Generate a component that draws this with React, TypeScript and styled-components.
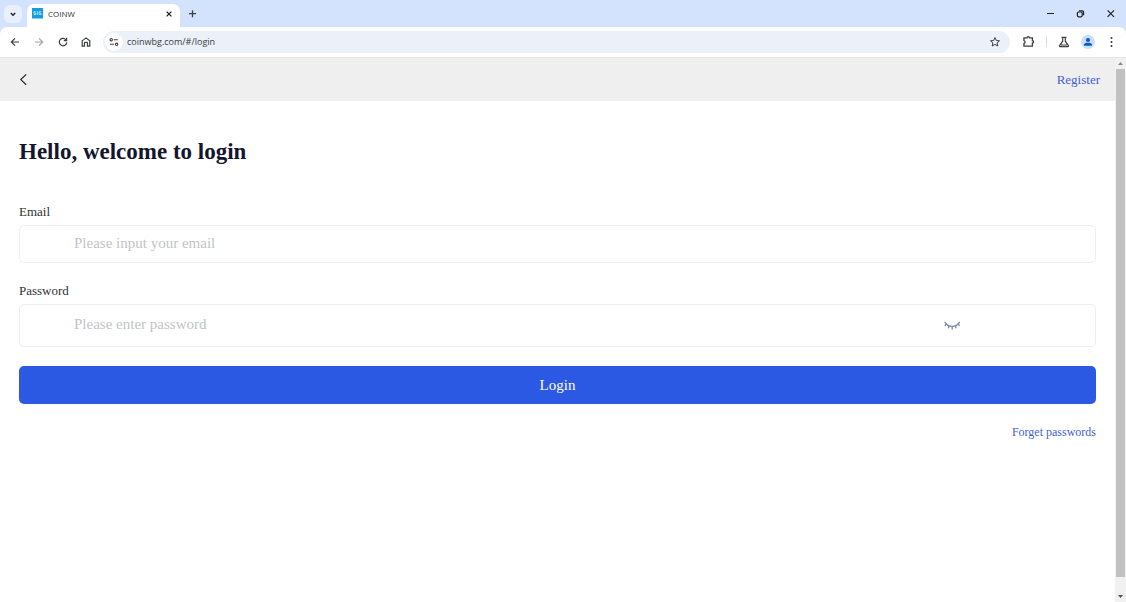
import React from "react";
import styled, { createGlobalStyle } from "styled-components";

const GlobalStyle = createGlobalStyle`
  * { box-sizing: border-box; }
  html, body, #root { height: 100%; }
  body { margin: 0; overflow: hidden; background: #fff; }
  button { padding: 0; border: 0; background: none; color: inherit; font: inherit; cursor: pointer; }
  a { text-decoration: none; }
  svg { display: block; flex: none; }
`;

const Window = styled.div`
  display: flex;
  flex-direction: column;
  height: 100vh;
  font-family: "Open Sans", "Noto Sans", sans-serif;
  color: #303236;
  background: #d3e2fd;
`;

const TabStrip = styled.div`
  display: flex;
  align-items: center;
  height: 27px;
  padding-left: 4px;
  flex: none;
`;

const TabSearch = styled.button`
  display: grid;
  place-items: center;
  width: 18px;
  height: 18px;
  border-radius: 6px;
  background: #e9f0fd;
`;

const Tab = styled.div`
  display: flex;
  align-items: center;
  align-self: flex-end;
  width: 153px;
  height: 23px;
  margin-left: 5px;
  padding: 0 5px 4px;
  border-radius: 7px 7px 0 0;
  background: #fff;
  font-size: 8px;
`;

const TabTitle = styled.span`
  flex: 1;
  padding-left: 5px;
  line-height: 18px;
`;

const IconButton = styled.button<{ $size?: number }>`
  display: grid;
  place-items: center;
  flex: none;
  width: ${(p) => p.$size ?? 24}px;
  height: ${(p) => p.$size ?? 24}px;
`;

const WindowControls = styled.div`
  display: flex;
  margin-left: auto;
`;

const WindowButton = styled.button`
  display: grid;
  place-items: center;
  width: 30px;
  height: 27px;
`;

const Toolbar = styled.div`
  display: flex;
  align-items: center;
  flex: none;
  height: 30px;
  padding: 0 3px 1px;
  border-radius: 7px 7px 0 0;
  background: #fff;
`;

const AddressBar = styled.div`
  display: flex;
  align-items: center;
  flex: 1;
  height: 22px;
  margin: 0 6px 0 5px;
  padding: 0 4px 0 2px;
  border-radius: 11px;
  background: #ebf0f9;
`;

const SiteInfo = styled.button`
  display: grid;
  place-items: center;
  flex: none;
  width: 18px;
  height: 18px;
  border-radius: 50%;
  background: #fff;
`;

const AddressInput = styled.input`
  flex: 1;
  min-width: 0;
  padding: 0 0 0 4px;
  border: 0;
  outline: 0;
  background: none;
  color: #3a3c40;
  font: 9px "Open Sans", "Noto Sans", sans-serif;
`;

const Divider = styled.span`
  width: 1px;
  height: 11px;
  margin: 0 5px 0 6px;
  background: #cfdcf3;
`;

const Viewport = styled.div`
  display: flex;
  flex: 1;
  min-height: 0;
  border-top: 1px solid #e3e4e6;
  background: #fff;
`;

const Page = styled.main`
  flex: 1;
  min-width: 0;
  font-family: "Liberation Serif", "Times New Roman", serif;
`;

const PageHeader = styled.header`
  display: flex;
  align-items: center;
  justify-content: space-between;
  height: 43px;
  padding: 0 15px 0 11px;
  background: #efefef;
`;

const TextLink = styled.a<{ $size: number }>`
  color: #3f5fd6;
  font-size: ${(p) => p.$size}px;
  line-height: 16px;
`;

const Form = styled.form`
  display: flex;
  flex-direction: column;
  padding: 38px 19px 0;
`;

const Title = styled.h1`
  margin: 0 0 39px;
  color: #14162d;
  font-size: 23px;
  line-height: 26px;
`;

const Label = styled.label`
  margin-bottom: 5px;
  color: #303133;
  font-size: 13px;
  line-height: 16px;
`;

const Field = styled.div<{ $height: number; $gap: number }>`
  display: flex;
  align-items: center;
  height: ${(p) => p.$height}px;
  margin-bottom: ${(p) => p.$gap}px;
  padding: 0 54px;
  border: 1px solid #eeeff1;
  border-radius: 5px;
`;

const TextInput = styled.input`
  flex: 1;
  min-width: 0;
  height: 100%;
  padding: 0 0 2px;
  border: 0;
  outline: 0;
  background: none;
  color: #303133;
  font: 15px "Liberation Serif", "Times New Roman", serif;
  &::placeholder { color: #c0c4c8; opacity: 1; }
`;

const RevealButton = styled(IconButton)`
  margin-right: 77px;
`;

const LoginButton = styled.button`
  height: 38px;
  margin-bottom: 20px;
  border-radius: 5px;
  background: #2c59e3;
  color: #fff;
  font-size: 15px;
`;

const FormFooter = styled.div`
  display: flex;
  justify-content: flex-end;
`;

const Scrollbar = styled.div`
  display: flex;
  flex-direction: column;
  width: 11px;
  background: #f1f1f1;
`;

const ScrollArrow = styled.button<{ $tall?: boolean }>`
  display: grid;
  place-items: center;
  height: ${(p) => (p.$tall ? 12 : 11)}px;
`;

const ScrollTrack = styled.div`
  flex: 1;
  padding: 0 1px 13px;
`;

const ScrollThumb = styled.div`
  height: 100%;
  background: #c1c1c1;
`;

type IconProps = { size?: number; color?: string; stroke?: number; children: React.ReactNode };

const Icon = ({ size = 12, color = "#3c3f43", stroke = 1.2, children }: IconProps) => (
  <svg width={size} height={size} viewBox="0 0 12 12" fill="none" stroke={color} strokeWidth={stroke} aria-hidden="true">
    {children}
  </svg>
);

export default function App() {
  return (
    <Window>
      <GlobalStyle />
      <TabStrip>
        <TabSearch aria-label="Search tabs">
          <Icon color="#1f2124" stroke={1.4}><path d="M3.8 5 6 7.2 8.2 5" /></Icon>
        </TabSearch>
        <Tab>
          <svg width="11" height="11" viewBox="0 0 11 11" aria-hidden="true">
            <rect width="11" height="10" fill="#109fdc" />
            <path d="M0 10.5h11" stroke="#8fcdec" />
            <path d="M3.7 3.7H1.9v1.4h1.7v1.5H1.7M5.3 3.3v3.6M9.2 3.7H7.1v2.9h2V5.3H8.2" fill="none" stroke="#d4f0fb" strokeWidth=".8" />
          </svg>
          <TabTitle>COINW</TabTitle>
          <IconButton $size={12} aria-label="Close tab">
            <Icon color="#1f2124" stroke={1.3}><path d="m3.6 3.6 4.8 4.8m0-4.8L3.6 8.4" /></Icon>
          </IconButton>
        </Tab>
        <IconButton aria-label="New tab">
          <Icon stroke={1.3}><path d="M6.5 2.2v7M3 5.7h7" /></Icon>
        </IconButton>
        <WindowControls>
          <WindowButton aria-label="Minimize"><Icon color="#1f2124" stroke={1}><path d="M2 5.5h7" /></Icon></WindowButton>
          <WindowButton aria-label="Restore">
            <Icon color="#1f2124" stroke={1.2}>
              <rect x="2.4" y="4" width="4.8" height="4.8" rx="1.2" />
              <path d="M4 2.8h3.2a1.4 1.4 0 0 1 1.4 1.4v3" />
            </Icon>
          </WindowButton>
          <WindowButton aria-label="Close"><Icon color="#1f2124" stroke={1.2}><path d="m2.6 2.4 6.4 6.4m0-6.4L2.6 8.8" /></Icon></WindowButton>
        </WindowControls>
      </TabStrip>

      <Toolbar>
        <IconButton aria-label="Back"><Icon><path d="M10 6H2.4M6 2.3 2.3 6 6 9.7" /></Icon></IconButton>
        <IconButton aria-label="Forward"><Icon color="#a2a4a7"><path d="M2 6h7.6M6 2.3 9.7 6 6 9.7" /></Icon></IconButton>
        <IconButton $size={23} aria-label="Reload">
          <Icon><path d="M9.2 4.2A3.7 3.7 0 1 0 9.7 6.4M9.6 1.8v2.8H6.8" /></Icon>
        </IconButton>
        <IconButton aria-label="Home">
          <Icon><path d="M2.2 4.9 6 1.9l3.8 3v5.3H7.5V7a.7.7 0 0 0-.7-.7H5.2a.7.7 0 0 0-.7.7v3.2H2.2z" /></Icon>
        </IconButton>
        <AddressBar>
          <SiteInfo aria-label="Site information">
            <Icon stroke={1.1}>
              <circle cx="3.2" cy="3.7" r="1.2" /><path d="M5.8 3.7h4M2 8.3h4" /><circle cx="8.6" cy="8.3" r="1.2" />
            </Icon>
          </SiteInfo>
          <AddressInput aria-label="Address" defaultValue="coinwbg.com/#/login" />
          <IconButton $size={22} aria-label="Bookmark">
            <Icon stroke={1}><path d="m6 1.6 1.3 2.9 3.2.3-2.4 2.1.7 3.1L6 8.4 3.2 10l.7-3.1-2.4-2.1 3.2-.3z" /></Icon>
          </IconButton>
        </AddressBar>
        <IconButton aria-label="Extensions">
          <Icon size={13}><path d="M1.8 2.6h2.8a1.1 1.1 0 0 1 2.2 0h2.8v2.6a1.1 1.1 0 0 1 0 2.2v2.8H1.8V7.8a1.4 1.4 0 0 0 0-2.7z" /></Icon>
        </IconButton>
        <Divider />
        <IconButton aria-label="Labs">
          <Icon><path d="M3.5 1.4h5M4.7 1.4v3.8L1.6 9.6c-.3.5 0 1 .5 1h7.8c.5 0 .8-.5.5-1L7.3 5.2V1.4M3 9h6" /></Icon>
        </IconButton>
        <IconButton aria-label="Profile">
          <svg width="14" height="14" viewBox="0 0 14 14" aria-hidden="true">
            <circle cx="7" cy="7" r="7" fill="#c9dffb" />
            <circle cx="7" cy="5" r="2" fill="#0b57d0" />
            <path d="M3 10.8V9.6C3 8.2 5 7.7 7 7.7s4 .5 4 1.9v1.2z" fill="#0b57d0" />
          </svg>
        </IconButton>
        <IconButton $size={23} aria-label="Menu">
          <Icon stroke={0}><g fill="#303236"><circle cx="5.5" cy="2" r="1" /><circle cx="5.5" cy="6" r="1" /><circle cx="5.5" cy="10" r="1" /></g></Icon>
        </IconButton>
      </Toolbar>

      <Viewport>
        <Page>
          <PageHeader>
            <IconButton aria-label="Go back">
              <Icon color="#22252b"><path d="M9.2.4 3.8 5.6l5.4 5.2" /></Icon>
            </IconButton>
            <TextLink $size={13} href="#/register">Register</TextLink>
          </PageHeader>
          <Form onSubmit={(e) => e.preventDefault()}>
            <Title>Hello, welcome to login</Title>
            <Label htmlFor="email">Email</Label>
            <Field $height={38} $gap={20}>
              <TextInput id="email" type="text" placeholder="Please input your email" />
            </Field>
            <Label htmlFor="password">Password</Label>
            <Field $height={43} $gap={19}>
              <TextInput id="password" type="password" placeholder="Please enter password" />
              <RevealButton type="button" aria-label="Show password">
                <svg width="18" height="12" viewBox="0 0 18 12" fill="none" stroke="#7c86ad" strokeWidth="1.3" strokeLinecap="round" aria-hidden="true">
                  <path d="M2 2.4C5.4 7.6 13 7.6 16.4 2.4M2.9 3.6l-.6 2M6 5.8l-.6 2M9.2 6.4v2.6M12.4 5.8l.6 2M15.5 3.6l.6 2" />
                </svg>
              </RevealButton>
            </Field>
            <LoginButton type="submit">Login</LoginButton>
            <FormFooter><TextLink $size={12} href="#/forget">Forget passwords</TextLink></FormFooter>
          </Form>
        </Page>
        <Scrollbar>
          <ScrollArrow aria-label="Scroll up">
            <svg width="5" height="3" viewBox="0 0 5 3"><path d="M0 3 2.5 0 5 3z" fill="#8b8b8b" /></svg>
          </ScrollArrow>
          <ScrollTrack><ScrollThumb /></ScrollTrack>
          <ScrollArrow $tall aria-label="Scroll down">
            <svg width="5" height="3" viewBox="0 0 5 3"><path d="M0 0 2.5 3 5 0z" fill="#505050" /></svg>
          </ScrollArrow>
        </Scrollbar>
      </Viewport>
    </Window>
  );
}
